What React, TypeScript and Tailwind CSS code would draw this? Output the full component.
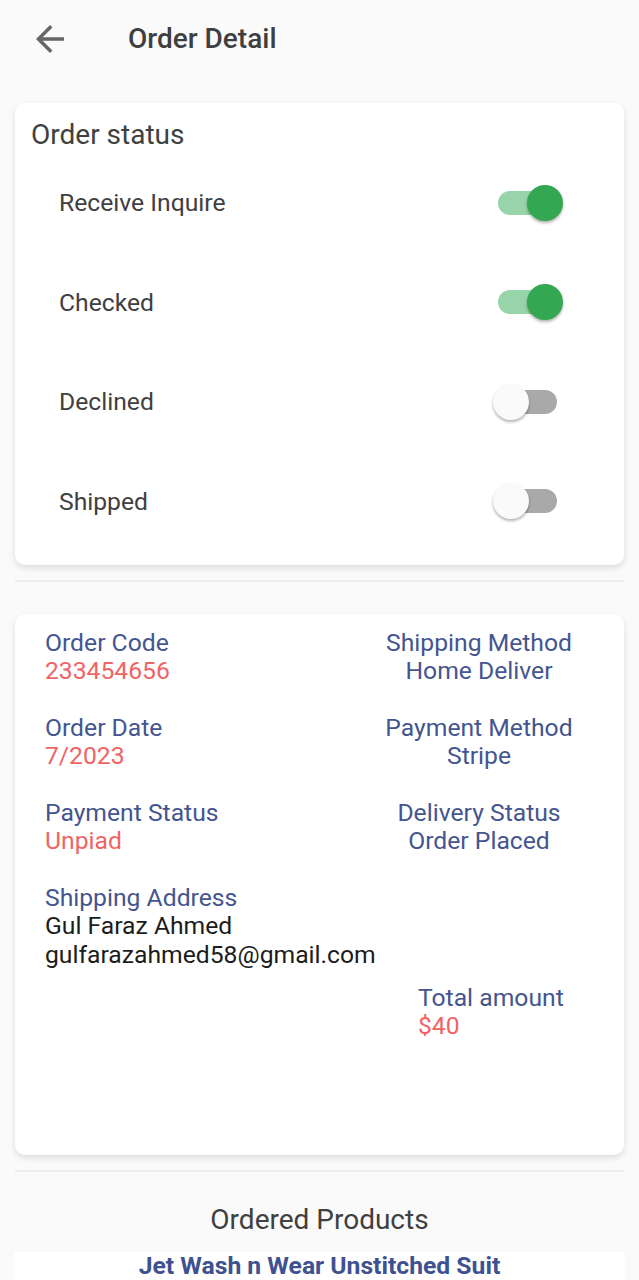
import React from "react";

const font = { fontFamily: "Roboto, 'Noto Sans', sans-serif" };

function Toggle({ on }: { on: boolean }) {
  return (
    <div
      className={`relative w-[59px] h-[24px] rounded-full ${on ? "bg-[#98d4a9]" : "bg-[#a9a9a9]"}`}
    >
      <div
        className={`absolute top-[-6px] w-[36px] h-[36px] rounded-full shadow-[0_2px_3px_rgba(0,0,0,0.3)] ${
          on ? "left-[29px] bg-[#33a752]" : "left-[-5px] bg-[#fafafa]"
        }`}
      />
    </div>
  );
}

function Pair({ label, value, right }: { label: string; value: string; right?: boolean }) {
  return (
    <div className={`flex flex-col ${right ? "items-center text-center w-[210px]" : ""}`}>
      <span className="text-[24.7px] leading-[28px] text-[#44558f]">{label}</span>
      <span className={`text-[24.7px] leading-[28px] ${right ? "text-[#44558f]" : "text-[#ef6464]"}`}>{value}</span>
    </div>
  );
}

export default function App() {
  const rows: [string, boolean][] = [
    ["Receive Inquire", true],
    ["Checked", true],
    ["Declined", false],
    ["Shipped", false],
  ];
  return (
    <div className="min-h-[1280px] bg-[#fafafa] overflow-hidden" style={font}>
      <div className="h-[78px] flex items-center">
        <svg width="42" height="42" viewBox="0 0 24 24" className="ml-[29px]" fill="#666">
          <path d="M20 11H7.83l5.59-5.59L12 4l-8 8 8 8 1.41-1.41L7.83 13H20v-2z" />
        </svg>
        <span className="ml-[57px] text-[28px] font-medium text-[#3f3f3f]">Order Detail</span>
      </div>

      <div className="mx-[15px] mt-[25px] bg-white rounded-[10px] shadow-[0_3px_6px_rgba(0,0,0,0.12)] pt-[14px] pb-[14px] px-[16px]">
        <div className="text-[28px] leading-[36px] text-[#404040]">Order status</div>
        {rows.map(([label, on]) => (
          <div key={label} className="h-[99.5px] flex items-center justify-between pl-[28px] pr-[51px]">
            <span className="text-[24.7px] text-[#404040]">{label}</span>
            <Toggle on={on} />
          </div>
        ))}
      </div>

      <div className="mx-[15px] mt-[15px] h-[2px] bg-[#ececec]" />

      <div className="mx-[15px] mt-[32px] bg-white rounded-[10px] shadow-[0_3px_6px_rgba(0,0,0,0.12)] pt-[15px] h-[541px] pl-[30px] pr-[40px]">
        <div className="flex justify-between">
          <Pair label="Order Code" value="233454656" />
          <Pair label="Shipping Method" value="Home Deliver" right />
        </div>
        <div className="flex justify-between mt-[29px]">
          <Pair label="Order Date" value="7/2023" />
          <Pair label="Payment Method" value="Stripe" right />
        </div>
        <div className="flex justify-between mt-[29px]">
          <Pair label="Payment Status" value="Unpiad" />
          <Pair label="Delivery Status" value="Order Placed" right />
        </div>
        <div className="flex flex-col mt-[29px]">
          <span className="text-[24.7px] leading-[28px] text-[#44558f]">Shipping Address</span>
          <span className="text-[24.7px] leading-[28.5px] text-[#1c1c1c]">Gul Faraz Ahmed</span>
          <span className="text-[24.7px] leading-[28.5px] text-[#1c1c1c]">gulfarazahmed58@gmail.com</span>
        </div>
        <div className="flex flex-col mt-[15px] pl-[373px]">
          <span className="text-[24.7px] leading-[28px] text-[#44558f]">Total amount</span>
          <span className="text-[24.7px] leading-[28px] text-[#ef6464]">$40</span>
        </div>
      </div>

      <div className="mx-[15px] mt-[15px] h-[2px] bg-[#ececec]" />

      <div className="text-center mt-[31px] text-[28px] leading-[34px] text-[#404040]">Ordered Products</div>

      <div className="mx-[14px] mt-[15px] bg-white h-[40px] text-center">
        <span className="text-[24.7px] font-bold text-[#3e5190] leading-[26px] relative top-[1px]">
          Jet Wash n Wear Unstitched Suit
        </span>
      </div>
    </div>
  );
}
